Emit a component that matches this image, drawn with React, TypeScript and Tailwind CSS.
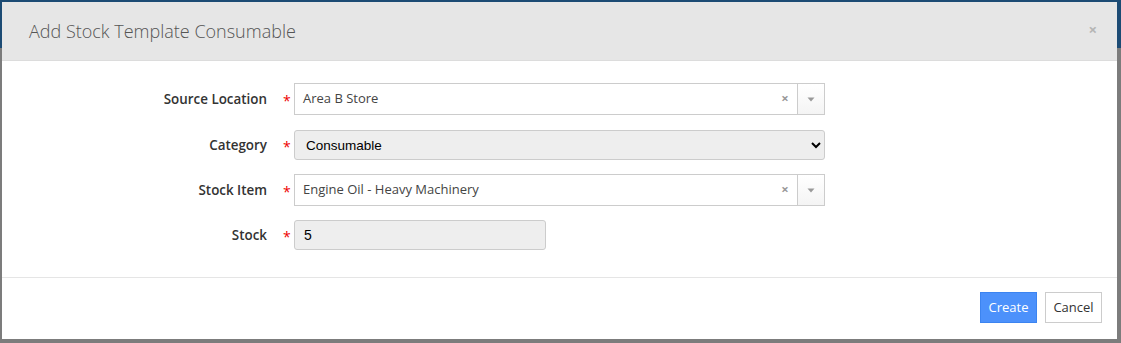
import React from 'react';

function Required() {
  return <span className="w-[27px] pl-[16px] text-[#e00] text-[14px] leading-none pt-[4px]">*</span>;
}

function Select2({ value }: { value: string }) {
  return (
    <div className="flex h-[32px] w-[531px] items-stretch border border-[#cccccc] bg-white">
      <span className="flex-1 self-center pl-[8px] text-[13px] text-[#444]">{value}</span>
      <span className="flex w-[24px] items-center justify-center text-[13px] font-bold text-[#999]">×</span>
      <span className="flex w-[27px] items-center justify-center border-l border-[#cccccc] bg-[linear-gradient(to_bottom,#ffffff,#f4f4f4)]">
        <svg width="8" height="5" viewBox="0 0 8 5">
          <path d="M0.5 0.5 L7.5 0.5 L4 4.5 Z" fill="#999" />
        </svg>
      </span>
    </div>
  );
}

function Row({ label, children, className }: { label: string; children: React.ReactNode; className?: string }) {
  return (
    <div className={`flex items-center ${className ?? ''}`}>
      <label className="w-[265px] pt-[1px] text-right text-[13.4px] font-semibold text-[#333]">{label}</label>
      <Required />
      {children}
    </div>
  );
}

export default function App() {
  return (
    <div className="h-[343px] w-[1121px] bg-[linear-gradient(to_bottom,#1c4b74_48px,#7c7c7c_48px)] pt-[2px] pl-[2px] pr-[4px] pb-[4px] font-['Open_Sans',sans-serif]">
      <div className="flex h-full flex-col bg-white">
        <div className="flex h-[59px] items-center justify-between border-b border-[#dcdcdc] bg-[#e6e6e6] pl-[27px] pr-[20px]">
          <h4 className="text-[18px] font-light text-[#555]">Add Stock Template Consumable</h4>
          <span className="text-[15px] font-bold text-[#b5b5b5] leading-none -mt-[4px]">×</span>
        </div>
        <div className="border-b border-[#e5e5e5] pt-[22px] pb-[27px]">
          <Row label="Source Location" className="mb-[15px]">
            <Select2 value="Area B Store" />
          </Row>
          <Row label="Category" className="mb-[14px]">
            <select
              defaultValue="Consumable"
              className="h-[30px] w-[531px] rounded-[3px] border border-[#cccccc] bg-[#eeeeee] pl-[7px] text-[13.5px] text-black font-['Liberation_Sans',sans-serif]"
            >
              <option>Consumable</option>
            </select>
          </Row>
          <Row label="Stock Item" className="mb-[14px]">
            <Select2 value="Engine Oil - Heavy Machinery" />
          </Row>
          <Row label="Stock">
            <input
              readOnly
              value="5"
              className="h-[30px] w-[252px] rounded-[3px] border border-[#cccccc] bg-[#eeeeee] pl-[9px] text-[14px] text-black font-['Liberation_Sans',sans-serif] outline-none"
            />
          </Row>
        </div>
        <div className="flex justify-end gap-[8px] pt-[14px] pr-[15px]">
          <button className="h-[31px] w-[57px] border border-[#3c84f0] bg-[#4c91fb] text-[13px] text-white">Create</button>
          <button className="h-[31px] w-[57px] border border-[#cccccc] bg-white text-[13px] text-[#333]">Cancel</button>
        </div>
      </div>
    </div>
  );
}
